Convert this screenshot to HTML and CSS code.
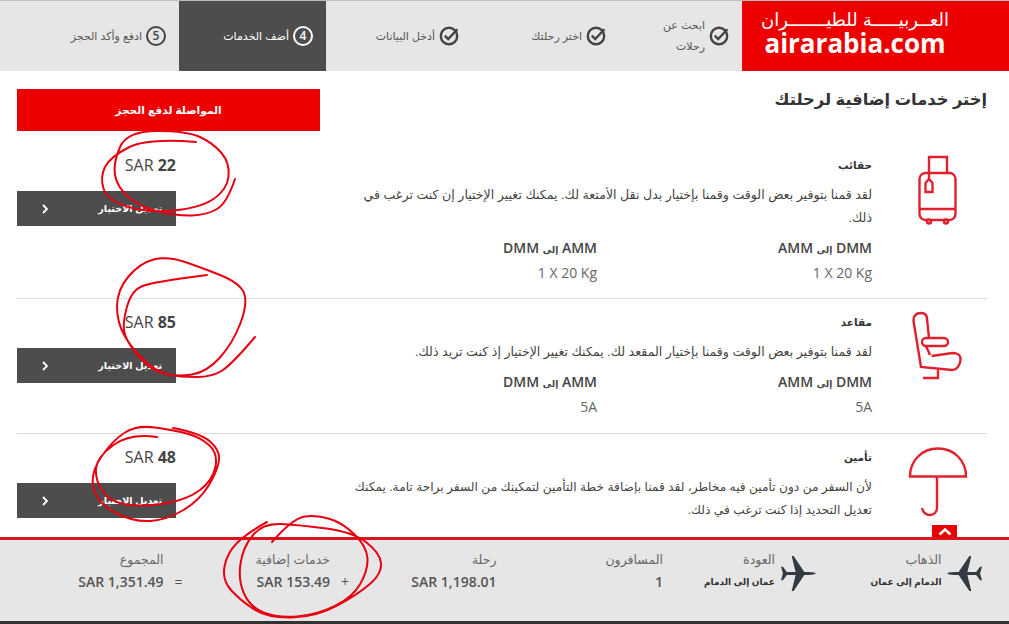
FILE: index.html
```html
<!DOCTYPE html>
<html lang="ar" dir="rtl">
<head>
<meta charset="utf-8">
<title>إختر خدمات إضافية لرحلتك</title>
<link rel="stylesheet" href="styles.css">
</head>
<body>
<header class="header">
  <div class="logo">
    <div class="logo-ar">العــربيـــــة للطيـــــــران</div>
    <div class="logo-en" dir="ltr">airarabia.com</div>
  </div>
  <nav class="steps">
    <div class="step step-1">
      <svg class="check" viewBox="0 0 20 20"><circle cx="10" cy="10" r="8.2"/><path d="M5.8 9.6l3.4 3.4L18.4 3.2"/></svg>
      <span>ابحث عن رحلات</span>
    </div>
    <div class="step step-2">
      <svg class="check" viewBox="0 0 20 20"><circle cx="10" cy="10" r="8.2"/><path d="M5.8 9.6l3.4 3.4L18.4 3.2"/></svg>
      <span>اختر رحلتك</span>
    </div>
    <div class="step step-3">
      <svg class="check" viewBox="0 0 20 20"><circle cx="10" cy="10" r="8.2"/><path d="M5.8 9.6l3.4 3.4L18.4 3.2"/></svg>
      <span>أدخل البيانات</span>
    </div>
    <div class="step step-4 active"><i class="num">4</i><span>أضف الخدمات</span></div>
    <div class="step step-5"><i class="num">5</i><span>ادفع وأكد الحجز</span></div>
  </nav>
</header>

<main class="main">
  <div class="top">
    <h1 class="title">إختر خدمات إضافية لرحلتك</h1>
    <a class="continue">المواصلة لدفع الحجز</a>
  </div>

  <section class="row">
    <div class="icon-col">
      <svg class="ico" viewBox="900 150 80 80">
        <path d="M929 173v-16h18v16"/>
        <rect x="919.500" y="173" width="36" height="47" rx="6"/>
        <path d="M920 209h35"/>
        <path d="M925.500 192v-9l3.500-4 3.500 4v9z"/>
        <path d="M929 173v6"/>
        <circle cx="929" cy="221.500" r="2"/><circle cx="946" cy="221.500" r="2"/>
      </svg>
    </div>
    <div class="content">
      <h2 class="name">حقائب</h2>
      <p class="desc">لقد قمنا بتوفير بعض الوقت وقمنا بإختيار بدل نقل الأمتعة لك. يمكنك تغيير الإختيار إن كنت ترغب في<br>ذلك.</p>
      <div class="routes">
        <div class="route"><div class="route-h">DMM <small>إلى</small> AMM</div><div class="route-v"><bdi dir="ltr">1 X 20 Kg</bdi></div></div>
        <div class="route"><div class="route-h">AMM <small>إلى</small> DMM</div><div class="route-v"><bdi dir="ltr">1 X 20 Kg</bdi></div></div>
      </div>
    </div>
    <div class="price-col">
      <div class="price"><bdi dir="ltr">SAR <b>22</b></bdi></div>
      <a class="edit"><span>تعديل الاختيار</span><svg class="chev" viewBox="0 0 8 10"><path d="M2 1l4 4-4 4"/></svg></a>
    </div>
  </section>

  <section class="row">
    <div class="icon-col">
      <svg class="ico" viewBox="900 307 80 80">
        <path d="M921 313c-5 0-8 3-7.500 8L921 367l31 3c5 0 8-5 8.500-10 .5-5-3-7-8-7l-21 3"/>
        <path d="M921 313c4 0 6 2 6 6l2 19"/>
        <rect x="922" y="338" width="26" height="8" rx="4"/>
        <path d="M926 346l4 9"/>
        <path d="M938 370v8h-15"/>
      </svg>
    </div>
    <div class="content">
      <h2 class="name">مقاعد</h2>
      <p class="desc">لقد قمنا بتوفير بعض الوقت وقمنا بإختيار المقعد لك. يمكنك تغيير الإختيار إذ كنت تريد ذلك.</p>
      <div class="routes">
        <div class="route"><div class="route-h">DMM <small>إلى</small> AMM</div><div class="route-v">5A</div></div>
        <div class="route"><div class="route-h">AMM <small>إلى</small> DMM</div><div class="route-v">5A</div></div>
      </div>
    </div>
    <div class="price-col">
      <div class="price"><bdi dir="ltr">SAR <b>85</b></bdi></div>
      <a class="edit"><span>تعديل الاختيار</span><svg class="chev" viewBox="0 0 8 10"><path d="M2 1l4 4-4 4"/></svg></a>
    </div>
  </section>

  <section class="row row-last">
    <div class="icon-col">
      <svg class="ico" viewBox="900 442 80 80">
        <path d="M910 476.500c0-16 12-28 28-28s28 12 28 28z"/>
        <path d="M937 477v31c0 4-3 7-7 7-4 0-7-3-8-7"/>
      </svg>
    </div>
    <div class="content">
      <h2 class="name">تأمين</h2>
      <p class="desc desc-tight">لأن السفر من دون تأمين فيه مخاطر، لقد قمنا بإضافة خطة التأمين لتمكينك من السفر براحة تامة. يمكنك<br>تعديل التحديد إذا كنت ترغب في ذلك.</p>
    </div>
    <div class="price-col">
      <div class="price"><bdi dir="ltr">SAR <b>48</b></bdi></div>
      <a class="edit"><span>تعديل الاختيار</span><svg class="chev" viewBox="0 0 8 10"><path d="M2 1l4 4-4 4"/></svg></a>
    </div>
  </section>
</main>

<footer class="footer">
  <div class="tab"><svg viewBox="0 0 14 9"><path d="M1.500 7.500L7 2.500l5.500 5"/></svg></div>
  <div class="summary">
    <div class="cell cell-flight">
      <svg class="plane plane-out" viewBox="0 0 36 36"><path d="M36 18c-2-1.500-6-1.500-12-1.500L13 0h-2l4 16.500H6L2 11H0l2 7-2 7h2l4-5.500h9L11 36h2l11-16.500c6 0 10 0 12-1.500z"/></svg>
      <div><div class="lab">الذهاب</div><div class="trip">الدمام إلى عمان</div></div>
    </div>
    <div class="cell cell-flight">
      <svg class="plane" viewBox="0 0 36 36"><path d="M36 18c-2-1.500-6-1.500-12-1.500L13 0h-2l4 16.500H6L2 11H0l2 7-2 7h2l4-5.500h9L11 36h2l11-16.500c6 0 10 0 12-1.500z"/></svg>
      <div><div class="lab">العودة</div><div class="trip">عمان إلى الدمام</div></div>
    </div>
    <div class="cell"><div><div class="lab">المسافرون</div><div class="val">1</div></div></div>
    <div class="cell"><div><div class="lab">رحلة</div><div class="val"><bdi dir="ltr">SAR 1,198.01</bdi></div></div></div>
    <div class="cell"><div><div class="lab">خدمات إضافية</div><div class="val"><span class="op">+</span><bdi dir="ltr">SAR 153.49</bdi></div></div></div>
    <div class="cell"><div><div class="lab">المجموع</div><div class="val"><span class="op">=</span><bdi dir="ltr">SAR 1,351.49</bdi></div></div></div>
  </div>
  <div class="base"></div>
</footer>

<svg class="scribbles" viewBox="0 0 1009 624">
  <path d="M196 142Q147 138 128.500 147.500Q110 157 105 167Q100 177 103.500 188.500Q107 200 127 206.500Q147 213 173.500 210.500Q200 208 213.500 199Q227 190 228.500 176.500Q230 163 221.500 153Q213 143 200 137Q187 131 157 131Q127 131 120 147Q113 163 115 175Q117 187 128.500 197Q140 207 158.500 211.500Q177 216 192 215.500Q207 215 217 209Q227 203 235 179"/>
  <path d="M207 275Q153 282 142.500 286Q132 290 127.500 305Q123 320 124 330Q125 340 137.500 355Q150 370 163.500 373.500Q177 377 192 374.500Q207 372 220 357.500Q233 343 240.500 323Q248 303 244 293Q240 283 220 275Q200 267 183.500 261.500Q167 256 153.500 259.500Q140 263 128.500 276.500Q117 290 117 306.500Q117 323 125 336.500Q133 350 145 361Q157 372 168.500 374.500Q180 377 196.500 377Q213 377 223 370Q233 363 255 337"/>
  <path d="M157 437Q130 433 113.500 445Q97 457 96 468.500Q95 480 102.500 491Q110 502 126.500 504.500Q143 507 165 503.500Q187 500 200 490Q213 480 215.500 466.500Q218 453 209 445Q200 437 186.500 433.500Q173 430 155 427.500Q137 425 125 432.500Q113 440 101.500 456.500Q90 473 93.500 488Q97 503 115 512.500Q133 522 150 521Q167 520 183.500 510Q200 500 209 485Q218 470 219 460Q220 450 210 441.500Q200 433 173 428"/>
  <path d="M272 542Q293 518 305 516.500Q317 515 330 519Q343 523 355 535Q367 547 367.500 558.500Q368 570 360.500 583.500Q353 597 335 606Q317 615 297 616.500Q277 618 263.500 612.500Q250 607 244 593.500Q238 580 240.500 563.500Q243 547 253 535Q263 523 281.500 524Q300 525 326.500 528.500Q353 532 366.500 542.500Q380 553 381 563Q382 573 371 583Q360 593 338.500 605Q317 617 292 617.500Q267 618 253.500 609Q240 600 231 590Q222 580 224.500 566.500Q227 553 237 543Q247 533 267 522"/>
</svg>
</body>
</html>
```

FILE: styles.css
```css
* { box-sizing: border-box; }
html, body { margin: 0; height: 100%; }
body {
  position: relative;
  width: 1009px;
  height: 624px;
  overflow: hidden;
  display: flex;
  flex-direction: column;
  background: #fff;
  color: #333;
  font-family: "Liberation Sans", "DejaVu Sans", sans-serif;
}

/* header */
.header {
  display: flex;
  height: 71px;
  flex: none;
  border-top: 1px solid #bdbdbd;
}
.logo {
  width: 267px;
  background: #ec0000;
  color: #fff;
  padding: 8px 41px 0 0;
  display: flex;
  flex-direction: column;
  align-items: center;
}
.logo-ar { font-size: 18px; line-height: 22px; white-space: nowrap; font-weight: 400; }
.logo-en {
  font-family: "Open Sans", sans-serif;
  font-weight: 700;
  font-size: 26px;
  line-height: 24px;
}
.steps { flex: 1; display: flex; background: #e6e6e6; }
.step {
  display: flex;
  align-items: center;
  gap: 4px;
  padding: 0 13px 0 0;
  font-size: 11px;
  line-height: 21px;
  color: #555;
  height: 70px;
}
.step-1 { width: 123px; }
.step-1 span { width: 54px; }
.step-2 { width: 147px; }
.step-3 { width: 146px; }
.step-4 { width: 147px; }
.step-5 { width: 179px; }
.step.active { background: #4d4d4d; color: #fff; }
.check { width: 20px; height: 20px; flex: none; fill: none; stroke: #444; stroke-width: 2.400; overflow: visible; }
.num {
  width: 20px;
  height: 20px;
  flex: none;
  border: 2px solid #444;
  border-radius: 50%;
  display: flex;
  align-items: center;
  justify-content: center;
  font: 600 12px/1 "Open Sans", sans-serif;
  color: #444;
}
.active .num { border-color: #fff; color: #fff; }

/* main */
.main { flex: 1; min-height: 0; overflow: hidden; padding: 0 22px 0 17px; }
.top {
  display: flex;
  justify-content: space-between;
  align-items: flex-start;
  padding-top: 18px;
  height: 71px;
}
.title { margin: -2px 0 0; font-size: 16.300px; line-height: 24px; font-weight: 700; color: #333; }
.continue {
  width: 303px;
  height: 42px;
  background: #ec0000;
  color: #fff;
  font-size: 10.700px;
  font-weight: 700;
  display: flex;
  align-items: center;
  justify-content: center;
}
.row {
  display: flex;
  justify-content: space-between;
  padding: 12px 0 14px;
  min-height: 135px;
  border-bottom: 1px solid #ddd;
}
.row-last { border-bottom: 0; }
.icon-col { width: 115px; flex: none; margin-top: -4px; padding-right: 7px; }
.ico { display: block; width: 80px; height: 80px; fill: none; stroke: #e0202c; stroke-width: 2.400; }
.content { width: 512px; flex: none; margin-left: auto; }
.name { margin: 0; font-size: 10.500px; line-height: 22px; font-weight: 700; color: #333; }
.desc { margin: 7.500px 0 0; font-size: 12.600px; line-height: 23px; color: #444; white-space: nowrap; }
.desc-tight { font-size: 12.200px; }
.routes { display: flex; margin-top: 7.500px; }
.route { width: 275px; flex: none; }
.route-h { font: 600 14px/22px "Open Sans", sans-serif; color: #444; }
.route-h small { font-size: 9px; line-height: 0; font-weight: 700; font-family: "Liberation Sans", "DejaVu Sans", sans-serif; }
.route-v { margin-top: 3px; font: 400 14px/22px "Open Sans", sans-serif; color: #666; }
.price-col { width: 159px; flex: none; }
.price { font: 400 16px/22px "Open Sans", sans-serif; color: #444; margin-bottom: 15px; }
.price b { font-weight: 700; }
.edit {
  height: 35px;
  background: #4d4d4d;
  color: #fff;
  font-size: 9.600px;
  font-weight: 700;
  display: flex;
  align-items: center;
  justify-content: space-between;
  padding: 0 14px 0 24px;
}
.chev { width: 8px; height: 10px; fill: none; stroke: #fff; stroke-width: 1.800; }

/* footer */
.footer {
  position: relative;
  flex: none;
  height: 87px;
  background: #e6e6e6;
  border-top: 3px solid #d9141f;
  display: flex;
  flex-direction: column;
}
.tab {
  position: absolute;
  top: -15px;
  left: 932px;
  width: 25px;
  height: 12px;
  background: #ec0000;
  display: flex;
  justify-content: center;
  align-items: center;
}
.tab svg { width: 14px; height: 9px; fill: none; stroke: #fff; stroke-width: 2.600; }
.summary {
  flex: 1;
  display: grid;
  grid-template-columns: repeat(5, 166.500px) 163.500px;
  padding: 10px 13px 0 0;
}
.cell { display: flex; align-items: flex-start; }
.cell-flight { gap: 5.500px; }
.plane { width: 35px; height: 35px; margin: 6px 14px 0 0; flex: none; fill: #333a42; }
.plane-out { transform: scaleX(-1); }
.lab { font-size: 12.500px; line-height: 20px; color: #666; }
.val { margin-top: 2px; font: 600 14px/20px "Open Sans", sans-serif; color: #555; display: flex; }
.trip { margin-top: 2px; font-size: 9px; line-height: 20px; font-weight: 700; color: #333; }
.op { width: 8px; margin: 0 -19px 0 11px; font-weight: 400; }
.base { height: 3px; background: #333; flex: none; }

/* hand-drawn annotations over the screenshot */
.scribbles {
  position: absolute;
  top: 0;
  left: 0;
  width: 1009px;
  height: 624px;
  pointer-events: none;
  fill: none;
  stroke: #e60012;
  stroke-width: 2;
  stroke-linecap: round;
  stroke-linejoin: round;
}
```
